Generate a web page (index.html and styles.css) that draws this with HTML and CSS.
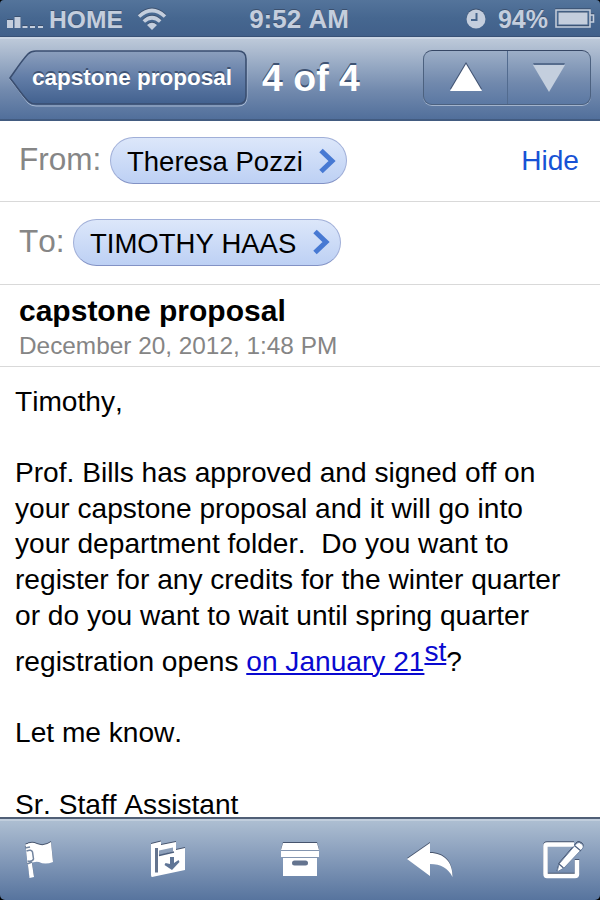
FILE: index.html
```html
<!DOCTYPE html>
<html lang="en">
<head>
<meta charset="utf-8">
<title>Mail</title>
<link rel="stylesheet" href="styles.css">
</head>
<body>
<div class="phone">
  <header class="status">
    <div class="carrier">
      <svg width="37" height="14" viewBox="0 0 37 14"><path d="M0 4h6v8H0zM7.500 1h6v11h-6zM15.500 10h5v2h-5zM23 10h5v2h-5zM31 10h5v2h-5z"/></svg>
      <span class="network">HOME</span>
      <svg class="wifi" width="30" height="23" viewBox="0 0 30 23"><g fill="none" stroke="#c4cedd" stroke-width="3.600"><path d="M2 8.500Q15-3.500 28 8.500"/><path d="M6.800 13.500Q15 6 23.200 13.500"/></g><path d="M10 17Q15 12.500 20 17L15 22z"/></svg>
    </div>
    <span class="clock">9:52 AM</span>
    <div class="power">
      <svg width="20" height="20" viewBox="0 0 20 20"><circle cx="10" cy="10" r="9.500"/><path d="M10.500 4v7H5" fill="none" stroke="#46658c" stroke-width="2"/></svg>
      <span class="percent">94%</span>
      <svg class="battery" width="40" height="20" viewBox="0 0 40 20"><path d="M1 1h34v17H1zM35.500 6h3v7h-3" fill="none" stroke="#c4cedd" stroke-width="1.600"/><path d="M3.500 3.500h29v12h-29z"/></svg>
    </div>
  </header>

  <nav class="navbar">
    <div class="back">
      <svg class="back-shape" width="240" height="58" viewBox="0 0 240 58">
        <defs><linearGradient id="back" x1="0" y1="0" x2="0" y2="1"><stop offset="0" stop-color="#8c9fbd"/><stop offset=".5" stop-color="#627da7"/><stop offset="1" stop-color="#42618f"/></linearGradient></defs>
        <path d="M1 29.500C8 20 14 11 19 5Q22 2 27 2H229Q238 2 238 11V47Q238 56 229 56H27Q22 56 19 53C14 47 8 38 1 29.500Z" fill="none" stroke="#a7b8d1" stroke-width="1"/>
        <path d="M1 28C8 18 14 9 19 4Q22 1 27 1H229Q237 1 237 9V46Q237 54 229 54H27Q22 54 19 51C14 46 8 37 1 28Z" fill="url(#back)" stroke="#3a4e70" stroke-width="1.600"/>
      </svg>
      <span class="back-label">capstone proposal</span>
    </div>
    <h1 class="title">4 of 4</h1>
    <div class="stepper">
      <div class="step"><svg width="34" height="30" viewBox="0 0 34 30"><path d="M17 0L33 27H1Z" fill="#405271"/><path d="M17 2L33 29H1Z" fill="#fff"/></svg></div>
      <div class="step"><svg width="34" height="30" viewBox="0 0 34 30"><path d="M1 1H33L17 28Z" fill="#566c8d"/><path d="M1 3H33L17 30Z" fill="#c4cfde"/></svg></div>
    </div>
  </nav>

  <main class="mail">
    <section class="row">
      <span class="label">From:</span>
      <div class="pill">Theresa Pozzi<svg class="chevron" width="18" height="26" viewBox="0 0 18 26"><path d="M3 2.500L14 13L3 23.500" fill="none" stroke="#4779d3" stroke-width="5"/></svg></div>
      <span class="hide">Hide</span>
    </section>
    <section class="row row-to">
      <span class="label">To:</span>
      <div class="pill">TIMOTHY HAAS<svg class="chevron" width="18" height="26" viewBox="0 0 18 26"><path d="M3 2.500L14 13L3 23.500" fill="none" stroke="#4779d3" stroke-width="5"/></svg></div>
    </section>
    <section class="subject">
      <h2>capstone proposal</h2>
      <time>December 20, 2012, 1:48 PM</time>
    </section>
    <article class="message">
      <p>Timothy,</p>
      <p>Prof. Bills has approved and signed off on<br>your capstone proposal and it will go into<br>your department folder.&nbsp; Do you want to<br>register for any credits for the winter quarter<br>or do you want to wait until spring quarter<br><span class="last-line">registration opens <a>on January 21</a><sup>st</sup>?</span></p>
      <p>Let me know.</p>
      <p>Sr. Staff Assistant</p>
    </article>
  </main>

  <footer class="toolbar">
    <svg class="icon" width="40" height="44" viewBox="0 0 40 44">
      <path d="M5.500 7.500L9 6.500L14 40L9.500 41Z"/>
      <path d="M6 8Q11 4 17 7Q24 10 31 5L33 25Q25 28 19 25Q13 24 7.500 28Z"/>
      <path d="M6.500 14q5-2 6 1l1 7q-1 3-6 2M7 27l5-2" fill="none" stroke="#73859f" stroke-width="1.500"/>
      <path d="M5 11l5-1" stroke="#73859f" stroke-width="1.500"/>
    </svg>
    <svg class="icon" width="40" height="44" viewBox="0 0 40 44">
      <path d="M3 7L13 4.500V8L28 5V13L37 11V33L4 40Q3 40 3 38Z"/>
      <path d="M8.500 11V35.500" fill="none" stroke="#64748e" stroke-width="3"/>
      <path d="M11 13.500L25 10.500V14.500L11 18.500Z" fill="#8c9fba"/>
      <path d="M11 18.500L26 15" fill="none" stroke="#4d5f7d" stroke-width="1.500"/>
      <path d="M22 20h4v6l4.500-3 1 2-7.500 8-7.500-5 1-2 4.500 1z" fill="#5f7596"/>
    </svg>
    <svg class="icon archive" width="42" height="44" viewBox="0 0 42 44">
      <path d="M4 6H38L40 13V20H38V39H4V20H2V13Z"/>
      <path d="M2 13.500H40M3 20.500H39" stroke="#8395b0" stroke-width="1"/>
      <rect x="13" y="23.500" width="16" height="5" rx="2.500" fill="#64748f"/>
    </svg>
    <svg class="icon" width="50" height="44" viewBox="0 0 50 44">
      <path d="M2 22L25 6V16C39 16 48 25 47.500 40C43 31 36 27 25 27V39Z"/>
    </svg>
    <svg class="icon" width="42" height="44" viewBox="0 0 42 44">
      <path d="M32 7.500H5Q3.500 7.500 3.500 9V37Q3.500 39 5 39H33Q35 39 35 37V23" fill="none" stroke="#fff" stroke-width="4.500"/>
      <path d="M15 35L17 27L35 6Q37 4.500 40 7Q42 9 41 11L22 31Z" stroke="#7186a5" stroke-width="1"/>
      <path d="M17 27l4.500 4M33 9l6 5" stroke="#4d6080" stroke-width="1.200"/>
    </svg>
  </footer>
</div>
</body>
</html>
```

FILE: styles.css
```css
* { box-sizing: border-box; }
body { margin: 0; background: #000; font-family: "Liberation Sans", Arial, sans-serif; font-kerning: none; }
.phone { width: 600px; height: 900px; display: flex; flex-direction: column; overflow: hidden; border-radius: 4px 4px 5px 5px; white-space: nowrap; }
svg { display: block; flex: none; }

.status { height: 37px; flex: none; display: grid; grid-template-columns: 1fr auto 1fr; align-items: center; padding: 0 5px 0 7px; background: linear-gradient(#54749b, #466790 50%, #41608a); color: #c4cedd; font-size: 25.5px; font-weight: bold; line-height: 37px; text-shadow: 0 -1px #3b506e; border-bottom: 1px solid #385176; }
.status svg { fill: #c4cedd; filter: drop-shadow(0 -1px #3b506e); }
.carrier, .power { display: flex; align-items: center; }
.carrier > svg:first-child { margin-top: 7px; }
.network { font-size: 24.6px; margin: 0 0 0 5px; }
.wifi { margin-left: 14px; }
.clock { font-size: 26px; margin: 0 4px 0 0; }
.power { justify-content: flex-end; }
.percent { font-size: 25px; margin: 1px 7px 0 12px; }

.navbar { height: 84px; flex: none; display: flex; align-items: flex-start; padding: 13px 9px 0; background: linear-gradient(#bdc9d9, #94a7c2 35%, #7189ad 65%, #516f9b); border-top: 2px solid #cbd6e4; border-bottom: 2px solid #425b80; color: #fff; text-shadow: 0 -2px #3f5373; }
.back { display: grid; width: 240px; height: 58px; margin-top: -2px; }
.back > * { grid-area: 1 / 1; }
.back-label { position: relative; padding-left: 23px; font-size: 22.5px; font-weight: bold; line-height: 55px; }
.title { margin: 0 0 0 13px; flex: 1; font-size: 37.5px; line-height: 53px; }
.stepper { display: flex; width: 168px; height: 55px; margin-top: -2px; border: 1.500px solid #4c617f; border-top-color: #364765; border-radius: 9px; background: linear-gradient(#9caec7, #7189ad 60%, #5b78a3); box-shadow: 0 1px #a3b4cd; }
.step { width: 50%; display: flex; align-items: center; justify-content: center; padding-bottom: 2px; }
.step + .step { border-left: 1.500px solid #526b8f; }

.mail { flex: 1; min-height: 0; overflow: hidden; background: #fff; color: #000; }
.row { height: 81px; display: flex; align-items: center; padding: 0 21px 1px 19px; border-bottom: 1px solid #d9d9d9; }
.row-to { height: 83px; padding-bottom: 2px; }
.label { font-size: 31.500px; color: #868686; padding-bottom: 2px; }
.row .label { width: 91px; }
.row-to .label { width: 54px; }
.pill { width: 237px; height: 47px; display: flex; align-items: center; padding: 3px 10px 0 16px; font-size: 27.500px; border: 1px solid #a0afd8; border-bottom-color: #8292c5; border-radius: 24px; background: linear-gradient(#dce7fa, #bdd0f4); }
.row-to .pill { width: 268px; }
.chevron { margin: -3px 0 0 auto; }
.hide { margin-left: auto; font-size: 28.125px; color: #1752d5; padding-top: 1px; }
.subject { height: 82px; padding: 8px 19px 0; border-bottom: 1px solid #d9d9d9; }
.subject h2 { margin: 0; font-size: 30px; line-height: 36px; }
.subject time { display: block; font-size: 24.375px; line-height: 33px; color: #858585; }
.message { padding: 17px 15px; font-size: 28.125px; line-height: 35.600px; }
.message p { margin: 0 0 35.600px; }
.message p:last-child { margin: 0; }
.last-line { display: block; padding-top: 11px; }
.message a, .message sup { color: #0909d0; text-decoration: underline; text-decoration-thickness: 2px; text-underline-offset: 2px; }
.message sup { font-size: 28.125px; line-height: 0; vertical-align: 10px; }

.toolbar { height: 83px; flex: none; display: flex; justify-content: space-between; align-items: flex-start; padding: 18px 16px 0 20px; background: linear-gradient(#afc0d3, #8ca1be 40%, #57749e); border-top: 2px solid #505f76; box-shadow: inset 0 2px #c1cedd; }
.icon { fill: #fff; filter: drop-shadow(0 -1px #46546d); }
.archive { transform: translateX(4px); }
```
